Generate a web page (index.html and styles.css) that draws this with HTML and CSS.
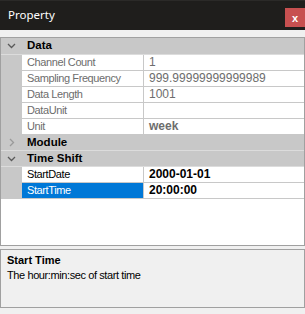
FILE: index.html
```html
<!DOCTYPE html>
<html lang="en">
<head>
    <meta charset="UTF-8">
    <title>Property</title>
    <link rel="stylesheet" href="styles.css">
</head>
<body>
    <div class="window">
        <!-- Title bar -->
        <div class="titlebar">
            <span class="title">Property</span>
            <span class="close">x</span>
        </div>

        <!-- Property grid -->
        <div class="grid">
            <div class="row category">
                <span class="toggle"><svg width="9" height="6" viewBox="0 0 9 6"><polyline points="1,1 4.5,4.5 8,1" fill="none" stroke="#5a5a5a" stroke-width="1.3"/></svg></span>
                <span class="cat-name">Data</span>
            </div>
            <div class="row prop readonly">
                <span class="margin"></span>
                <span class="name">Channel Count</span>
                <span class="value">1</span>
            </div>
            <div class="row prop readonly">
                <span class="margin"></span>
                <span class="name">Sampling Frequency</span>
                <span class="value">999.99999999999989</span>
            </div>
            <div class="row prop readonly">
                <span class="margin"></span>
                <span class="name">Data Length</span>
                <span class="value">1001</span>
            </div>
            <div class="row prop readonly">
                <span class="margin"></span>
                <span class="name">DataUnit</span>
                <span class="value"></span>
            </div>
            <div class="row prop readonly">
                <span class="margin"></span>
                <span class="name">Unit</span>
                <span class="value bold">week</span>
            </div>
            <div class="row category">
                <span class="toggle"><svg width="6" height="9" viewBox="0 0 6 9"><polyline points="1,1 4.5,4.5 1,8" fill="none" stroke="#9a9a9a" stroke-width="1.3"/></svg></span>
                <span class="cat-name">Module</span>
            </div>
            <div class="row category">
                <span class="toggle"><svg width="9" height="6" viewBox="0 0 9 6"><polyline points="1,1 4.5,4.5 8,1" fill="none" stroke="#5a5a5a" stroke-width="1.3"/></svg></span>
                <span class="cat-name">Time Shift</span>
            </div>
            <div class="row prop">
                <span class="margin"></span>
                <span class="name">StartDate</span>
                <span class="value bold">2000-01-01</span>
            </div>
            <div class="row prop selected">
                <span class="margin"></span>
                <span class="name">StartTime</span>
                <span class="value bold">20:00:00</span>
            </div>
        </div>

        <!-- Description panel -->
        <div class="desc">
            <div class="desc-title">Start Time</div>
            <div class="desc-text">The hour:min:sec of start time</div>
        </div>
    </div>
</body>
</html>
```

FILE: styles.css
```css
body {
    margin: 0;
    background-color: #f0f0f0;
    font-family: "Liberation Sans", Arial, sans-serif;
    font-size: 11px;
    color: #000;
}

.window {
    width: 305px;
    height: 314px;
    display: flex;
    flex-direction: column;
}

.titlebar {
    height: 30px;
    background-color: #1f1e1c;
    border-top: 1px solid #2b2a28;
    box-sizing: border-box;
    display: flex;
    justify-content: space-between;
    align-items: flex-start;
}

.title {
    font-family: "Noto Sans", sans-serif;
    font-size: 11.5px;
    color: #fff;
    padding: 6px 0 0 8px;
}

.close {
    width: 20px;
    height: 19px;
    margin-top: 7px;
    background-color: #c75050;
    color: #fff;
    font-weight: bold;
    font-size: 11px;
    display: flex;
    align-items: center;
    justify-content: center;
}

/* Property grid */
.grid {
    margin-top: 7px;
    height: 209px;
    box-sizing: border-box;
    border: 1px solid #a0a0a0;
    background-color: #fff;
}

.row {
    display: grid;
    grid-template-columns: 21px 122px 1fr;
    height: 16px;
    box-sizing: border-box;
    border-bottom: 1px solid #c8c8c8;
}

.row:first-child {
    height: 17px;
}

.category {
    background-color: #c8c8c8;
    border-bottom-color: #dcdcdc;
}

.toggle {
    display: flex;
    align-items: center;
    justify-content: center;
}

.cat-name {
    grid-column: 2 / 4;
    font-weight: bold;
    font-size: 11.5px;
    padding-left: 5px;
    line-height: 15px;
}

.margin {
    background-color: #c8c8c8;
}

.name, .value {
    padding-left: 5px;
    line-height: 15px;
    white-space: nowrap;
    overflow: hidden;
}

.name {
    font-size: 11px;
    letter-spacing: -0.4px;
    border-right: 1px solid #c8c8c8;
}

.value {
    font-size: 12px;
}

.readonly .name, .readonly .value {
    color: #6d6d6d;
}

.bold {
    font-weight: bold;
}

.selected .name {
    background-color: #0078d7;
    color: #fff;
}

/* Description panel */
.desc {
    margin-top: 3px;
    height: 59px;
    box-sizing: border-box;
    border: 1px solid #a0a0a0;
    padding: 3px 6px;
}

.desc-title {
    font-weight: bold;
    line-height: 14px;
}

.desc-text {
    font-size: 11px;
    letter-spacing: -0.4px;
    line-height: 16px;
}
```
